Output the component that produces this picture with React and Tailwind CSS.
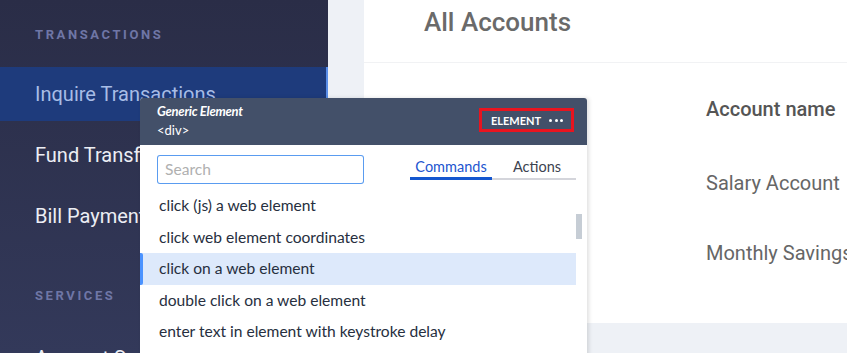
export default function App() {
  const items = [
    "click (js) a web element",
    "click web element coordinates",
    "click on a web element",
    "double click on a web element",
    "enter text in element with keystroke delay",
  ];
  return (
    <div className="relative w-[847px] h-[353px] overflow-hidden flex bg-[#eef1f6]" style={{ fontFamily: "Roboto, sans-serif" }}>
      {/* Sidebar */}
      <div className="w-[328px] h-full flex flex-col bg-gradient-to-b from-[#2a2d47] to-[#33395a] shrink-0 overflow-hidden">
        <div className="shrink-0 pl-[35px] pt-[27px] h-[67px] text-[13px] font-bold tracking-[0.2em] text-[#6f76a6] leading-[16px]">TRANSACTIONS</div>
        <div className="shrink-0 h-[54px] mb-[7px] flex items-center pl-[35px] bg-[#1e3b7c] border-r-[2px] border-[#5a8ee8] text-[20px] text-[#a8bde6]">Inquire Transactions</div>
        <div className="shrink-0 h-[54px] mb-[7px] flex items-center pl-[35px] text-[20px] text-[#eceef4]">Fund Transfer</div>
        <div className="shrink-0 h-[54px] mb-[7px] flex items-center pl-[35px] text-[20px] text-[#eceef4]">Bill Payments</div>
        <div className="shrink-0 pl-[35px] pt-[38px] h-[72px] text-[13px] font-bold tracking-[0.2em] text-[#6f76a6] leading-[16px]">SERVICES</div>
        <div className="shrink-0 mt-[24px] pl-[35px] text-[20px] text-[#eceef4] leading-[24px] whitespace-nowrap">Account Services</div>
      </div>
      {/* Main */}
      <div className="flex-1 h-full pl-[36px] flex flex-col">
        <div className="h-[323px] bg-white border-r border-[#c7ced8] flex flex-col overflow-hidden">
          <div className="h-[63px] border-b border-[#f1f2f4] pl-[60px] pt-[5px] text-[26px] font-medium text-[#6a6a6a] leading-[34px]">All Accounts</div>
          <div className="pl-[342px] flex flex-col text-[20px] text-[#666] whitespace-nowrap">
            <div className="mt-[33px] h-[26px] leading-[26px] font-medium text-[#555]">Account name</div>
            <div className="mt-[48px] h-[26px] leading-[26px]">Salary Account</div>
            <div className="mt-[44px] h-[26px] leading-[26px]">Monthly Savings</div>
          </div>
        </div>
      </div>

      {/* Popup */}
      <div className="absolute left-[140px] top-[98px] w-[447px] h-[270px] bg-white rounded-t-[3px] shadow-[2px_0_4px_rgba(0,0,0,0.12)] flex flex-col" style={{ fontFamily: "Lato, sans-serif" }}>
        <div className="h-[47px] bg-[#435069] rounded-t-[3px] flex items-start justify-between pl-[17px] pr-[13px]">
          <div className="flex flex-col pt-[5px] text-white">
            <div className="text-[13px] italic font-bold leading-[17px] tracking-[-0.02em]">Generic Element</div>
            <div className="text-[13px] leading-[17px] mt-[2px]">&lt;div&gt;</div>
          </div>
          <div className="mt-[10px] w-[95px] h-[24px] border-[3px] border-[#e8141f] flex items-center pl-[9px] gap-[8px] text-white">
            <span className="text-[11px] font-bold leading-none">ELEMENT</span>
            <span className="flex gap-[2.5px] items-center">
              <span className="w-[3px] h-[3px] rounded-full bg-white"></span>
              <span className="w-[3px] h-[3px] rounded-full bg-white"></span>
              <span className="w-[3px] h-[3px] rounded-full bg-white"></span>
            </span>
          </div>
        </div>
        <div className="flex items-start pl-[17px] pt-[10px] h-[45px]">
          <div className="w-[207px] h-[29px] ring-1 ring-inset ring-[#5a9cf0] rounded-[3px] flex items-center pl-[8px] text-[15.6px] text-[#b0b0b0]">Search</div>
          <div className="ml-[46px] w-[166px] flex border-b-2 border-[#d4d5db] h-[25px] items-start text-[14.5px]">
            <div className="w-[82px] h-[25px] flex justify-center pt-[1px] text-[#1c55cf] border-b-[3px] border-[#1456cf] -mb-[2px]">Commands</div>
            <div className="pl-[21px] pt-[1px] text-[#3d4350]">Actions</div>
          </div>
        </div>
        <div className="relative flex flex-col w-[436px]">
          {items.map((t, i) => (
            <div key={i} className={`relative h-[31.5px] flex items-center pl-[19px] text-[15.6px] text-[#272f40] whitespace-nowrap ${i === 2 ? "bg-[#dde9fb]" : ""}`}>
              {i === 2 && <span className="absolute left-0 top-0 w-[3px] h-full bg-[#4b93ff] rounded-r-[2px]"></span>}
              {t}
            </div>
          ))}
          <div className="absolute right-[-6px] top-[24px] w-[6px] h-[25px] bg-[#c6cdd5]"></div>
        </div>
      </div>
    </div>
  );
}
